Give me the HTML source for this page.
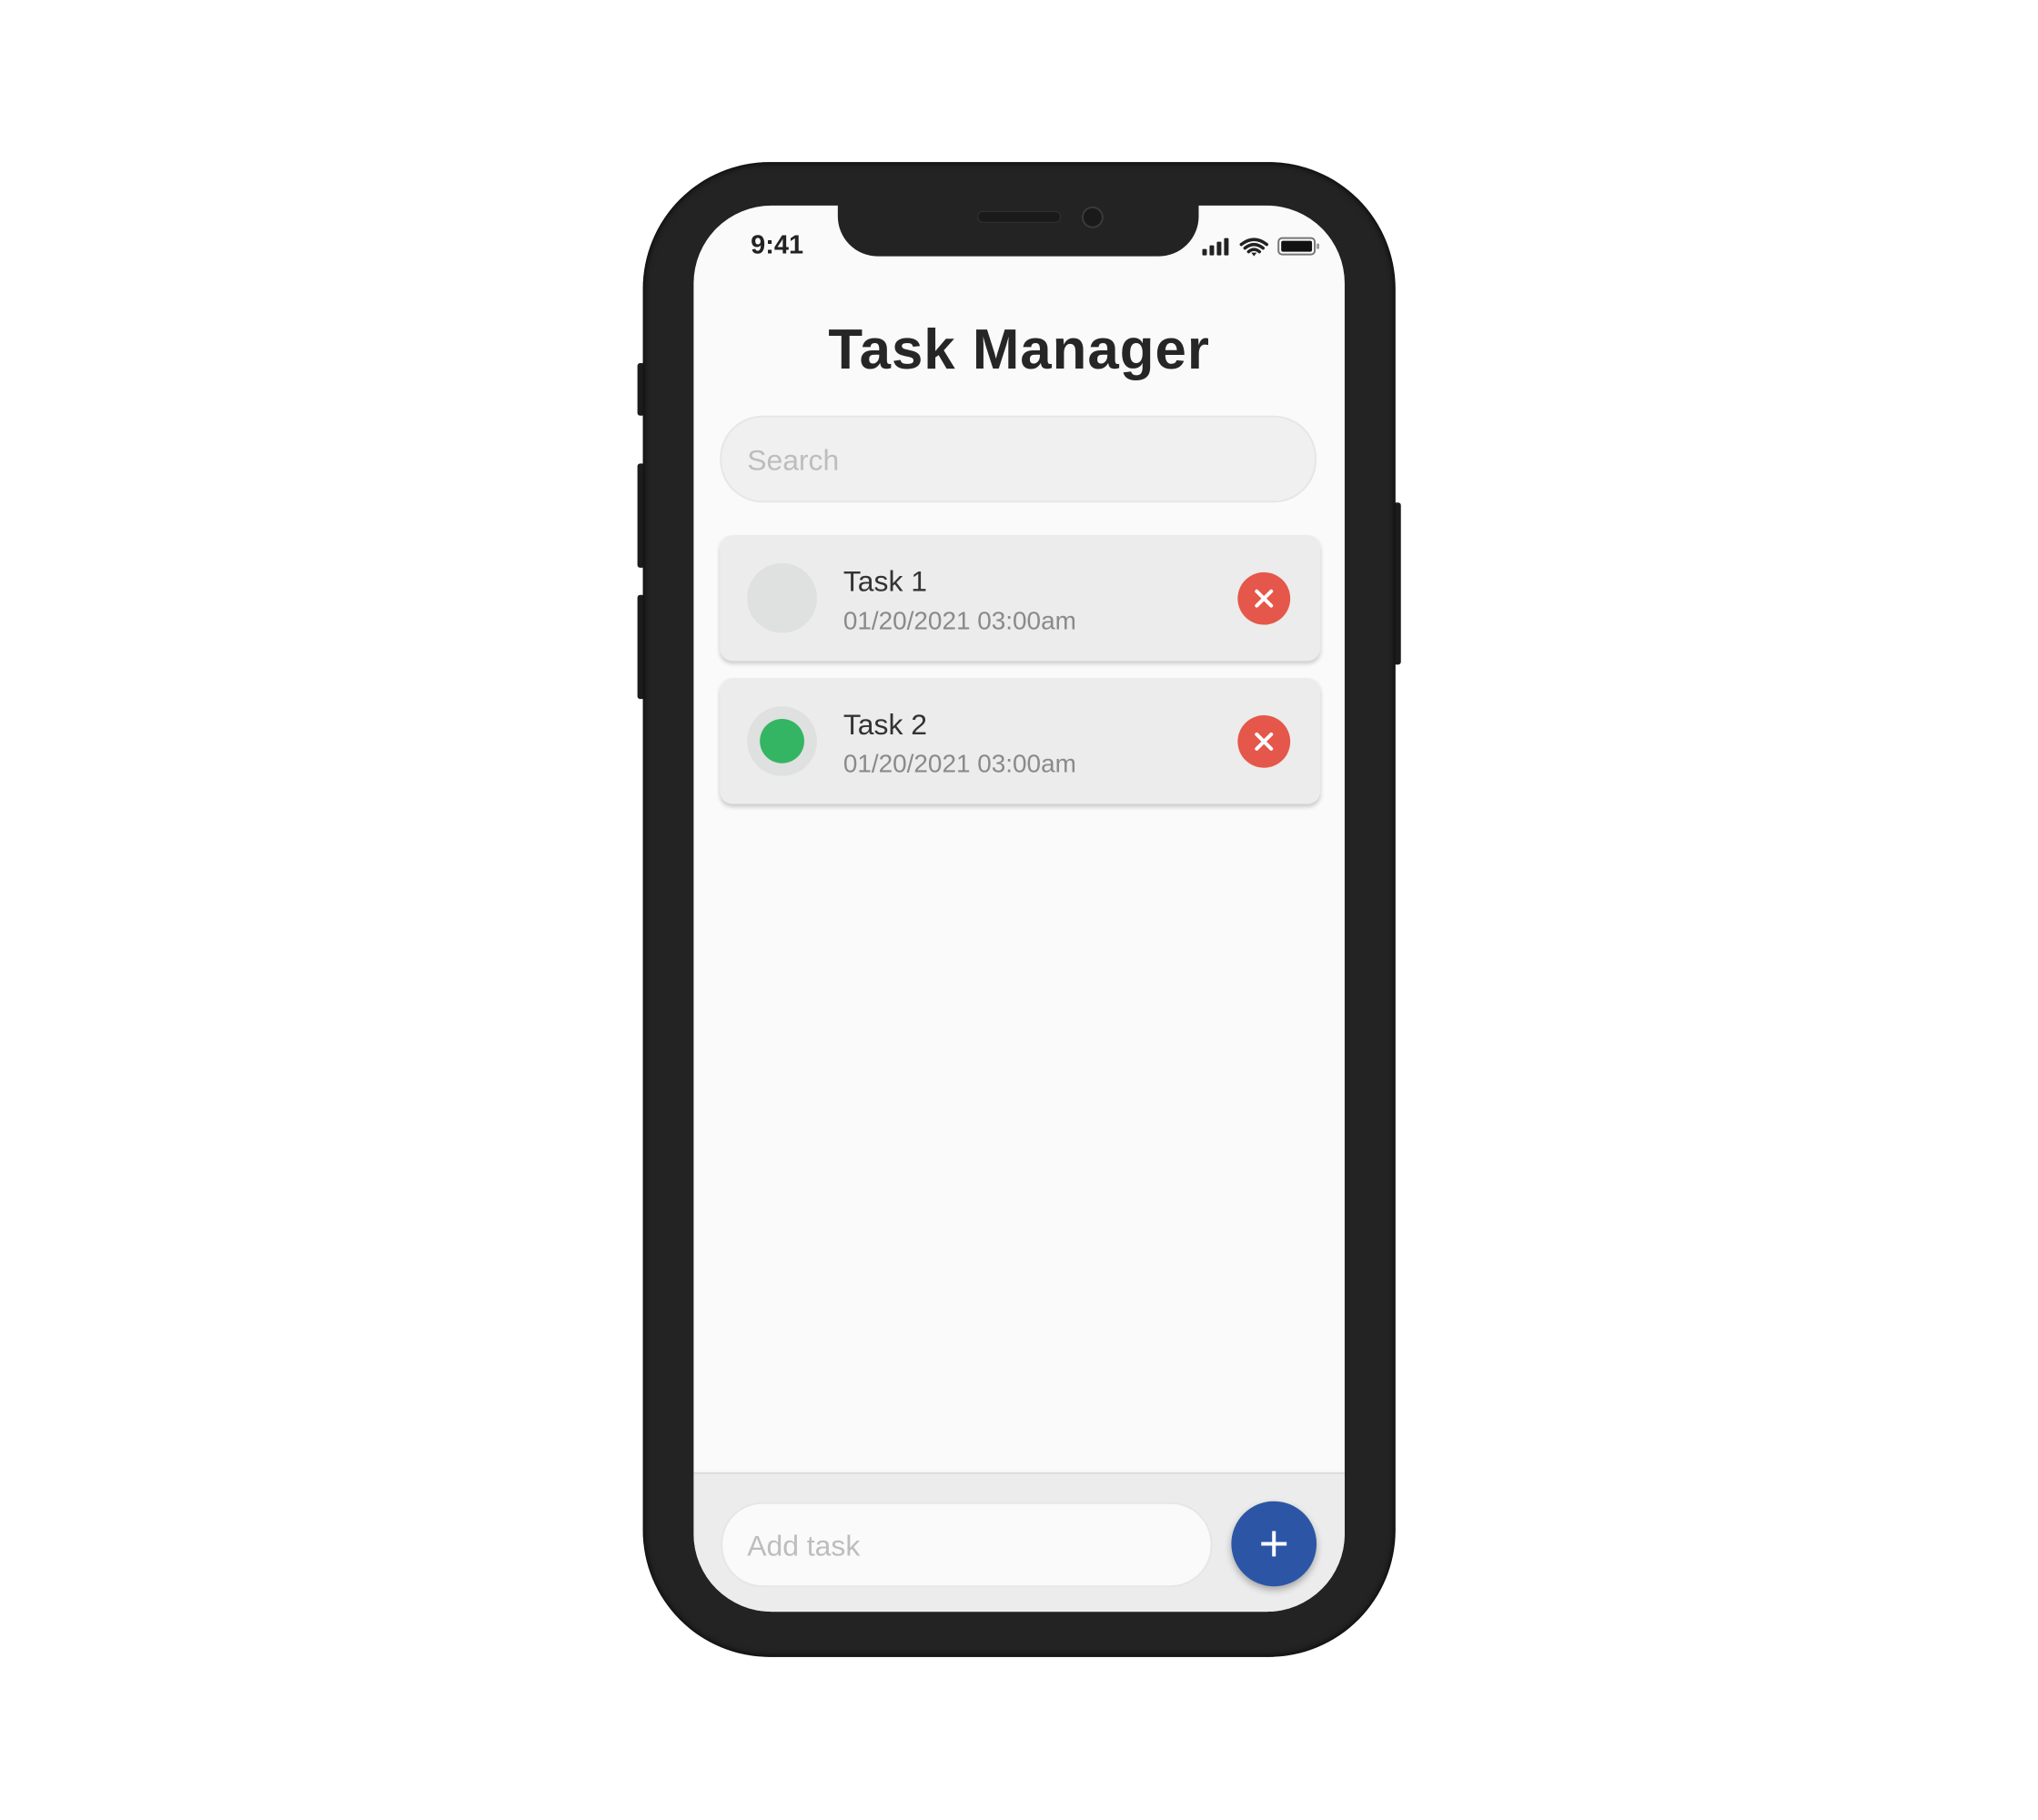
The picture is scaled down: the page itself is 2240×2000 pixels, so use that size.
<!DOCTYPE html>
<html><head><meta charset="utf-8"><style>
body{margin:0;width:2240px;height:2000px;background:#fff;position:relative;overflow:hidden;font-family:"Liberation Sans",sans-serif}
#w{position:absolute;left:0;top:0;width:2240px;height:2000px;transform:translate(-2px,-1px) scale(0.9966,0.995);transform-origin:0 0}
.abs{position:absolute}
.phone{left:711px;top:180px;width:830px;height:1651px;background:#232323;border-radius:140px;box-shadow:inset 0 0 8px #000}
.screen{left:767px;top:228px;width:718px;height:1553px;background:#fafafa;border-radius:86px;overflow:hidden}
.notch{left:926px;top:220px;width:398px;height:64px;background:#232323;border-radius:0 0 44px 44px}
.btn{background:#1c1c1c;border-radius:3px}
.card{left:796px;width:662px;height:139px;background:#ececec;border-radius:14px;box-shadow:0 3px 5px rgba(0,0,0,.18)}
.circ{left:30px;top:31px;width:77px;height:77px;border-radius:50%;background:#dfe0e0}
.t1{left:136px;top:33px;font-size:32px;color:#333}
.t2{left:136px;top:79px;font-size:28px;color:#8a8a8a}
.x{left:571px;top:41px;width:58px;height:58px;border-radius:50%;background:#e5574a}
</style></head><body><div id="w">
<div class="abs btn" style="left:705px;top:402px;width:8px;height:58px"></div>
<div class="abs btn" style="left:705px;top:513px;width:8px;height:115px"></div>
<div class="abs btn" style="left:705px;top:658px;width:8px;height:115px"></div>
<div class="abs btn" style="left:1539px;top:556px;width:8px;height:179px"></div>
<div class="abs phone"></div>
<div class="abs screen">
  <div class="abs" style="left:0;top:1399px;width:718px;height:154px;background:#ececec;border-top:2px solid #dcdcdc"></div>
</div>
<div class="abs notch"></div>
<div class="abs" style="left:1080px;top:234px;width:90px;height:11px;border-radius:6px;background:#1a1a1a;border:1px solid #333"></div>
<div class="abs" style="left:1195px;top:229px;width:20px;height:20px;border-radius:50%;background:#1a1a1a;border:2px solid #3a3a3a"></div>
<div class="abs" style="left:830px;top:256px;font-size:29px;font-weight:bold;color:#222">9:41</div>
<svg class="abs" style="left:1328px;top:261px" width="130" height="26" viewBox="0 0 130 26">
 <rect x="0" y="15" width="5" height="7" rx="1" fill="#222"/><rect x="8" y="11" width="5" height="11" rx="1" fill="#222"/><rect x="16" y="7" width="5" height="15" rx="1" fill="#222"/><rect x="24" y="3" width="5" height="19" rx="1" fill="#222"/>
 <path d="M43 10 Q57 -1 71 10 M47 14 Q57 6 67 14 M51 18 Q57 13 63 18" stroke="#222" stroke-width="3.5" fill="none" stroke-linecap="round"/><path d="M54 19 L57 23 L60 19Z" fill="#222"/>
 <rect x="84" y="3" width="40" height="18" rx="4" fill="none" stroke="#777" stroke-width="2"/><rect x="87" y="6" width="34" height="12" rx="2" fill="#111"/><rect x="126" y="9" width="3" height="6" rx="1" fill="#999"/>
</svg>
<div class="abs" style="left:767px;top:352px;width:718px;text-align:center;font-size:62px;letter-spacing:1px;font-weight:bold;color:#262626">Task Manager</div>
<div class="abs" style="left:796px;top:460px;width:654px;height:92px;border-radius:47px;background:#f0f0f0;border:2px solid #e6e6e6"></div>
<div class="abs" style="left:826px;top:491px;font-size:32px;color:#bdbdbd">Search</div>
<div class="abs card" style="top:592px">
  <div class="abs circ"></div>
  <div class="abs t1">Task 1</div><div class="abs t2">01/20/2021 03:00am</div>
  <svg class="abs x" viewBox="0 0 58 58"><path d="M21 21L37 37M37 21L21 37" stroke="#fff" stroke-width="4" stroke-linecap="round"/></svg>
</div>
<div class="abs card" style="top:750px">
  <div class="abs circ"><div class="abs" style="left:14px;top:14px;width:49px;height:49px;border-radius:50%;background:#34b563"></div></div>
  <div class="abs t1">Task 2</div><div class="abs t2">01/20/2021 03:00am</div>
  <svg class="abs x" viewBox="0 0 58 58"><path d="M21 21L37 37M37 21L21 37" stroke="#fff" stroke-width="4" stroke-linecap="round"/></svg>
</div>
<div class="abs" style="left:797px;top:1660px;width:538px;height:90px;border-radius:46px;background:#fafafa;border:2px solid #e6e6e6"></div>
<div class="abs" style="left:826px;top:1690px;font-size:32px;color:#bdbdbd">Add task</div>
<svg class="abs" style="left:1360px;top:1659px;width:94px;height:94px;border-radius:50%;background:#2c56a5;box-shadow:0 4px 8px rgba(0,0,0,.3)" viewBox="0 0 94 94"><path d="M47 33V61M33 47H61" stroke="#fff" stroke-width="4"/></svg>
</div></body></html>
